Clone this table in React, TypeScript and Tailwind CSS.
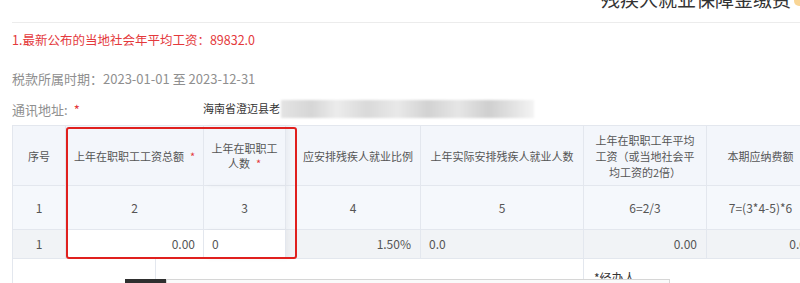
import React from 'react';

const font = { fontFamily: '"Noto Sans CJK SC", "Noto Sans", sans-serif' };

function Star() {
  return <span className="text-[#e4393c] ml-[6px]">*</span>;
}

export default function App() {
  const cols = 'grid grid-cols-[53px_138px_82px_135px_163px_123px_108px] w-[802px]';
  const cell = 'border-r border-b border-[#e3e7ee] flex items-center';

  return (
    <div className="relative w-[800px] h-[283px] overflow-hidden bg-white text-[#555]" style={font}>
      {/* Title bar */}
      <div className="ml-[12px] h-[23px] border-b border-[#ececec] flex justify-end items-start">
        <span className="-mt-[11px] text-[19px] leading-[19px] text-[#333]">残疾人就业保障金缴费</span>
        <span className="ml-[3px] -mt-[4px] w-[6px] h-[10px] rounded-l-full bg-[#f6c56a]/70" />
      </div>

      <div className="px-[12px]">
        <div className="mt-[7px] text-[12.5px] leading-[20px] text-[#e4393c]">1.最新公布的当地社会年平均工资：89832.0</div>
        <div className="mt-[19px] text-[13px] leading-[20px] text-[#8f8f8f]">税款所属时期：2023-01-01 至 2023-12-31</div>

        <div className="mt-[11px] flex items-center h-[20px]">
          <div className="w-[191px] text-[13px] text-[#8f8f8f]">
            通讯地址:<span className="text-[#e4393c] ml-[6px]">*</span>
          </div>
          <span className="text-[11px] text-[#333] -mt-[3px]">海南省澄迈县老</span>
          <div className="ml-[1px] -mt-[2px] w-[253px] h-[18px] blur-[1px] bg-[linear-gradient(90deg,#e4e4e4,#d6d6d6_12%,#ececec_22%,#d9d9d9_34%,#e9e9e9_46%,#d2d2d2_58%,#e6e6e6_70%,#cfcfcf_82%,#e3e3e3_92%,#f4f4f4)]" />
        </div>
      </div>

      {/* Table */}
      <div className="relative ml-[12px] mt-[5px] border-t border-l border-[#e3e7ee] w-[802px]">
        <div className={`${cols} h-[60px] bg-[#f3f6fb] text-[11px] leading-[16px]`}>
          <div className={`${cell} justify-center`}>序号</div>
          <div className={`${cell} justify-center`}>上年在职职工工资总额<Star /></div>
          <div className={`${cell} justify-center text-center leading-[15px] shadow-[3px_0_4px_rgba(0,0,0,0.04)]`}>
            <div>上年在职职工<br />人数<Star /></div>
          </div>
          <div className={`${cell} justify-center pl-[10px]`}>应安排残疾人就业比例</div>
          <div className={`${cell} justify-center`}>上年实际安排残疾人就业人数</div>
          <div className={`${cell} justify-center text-center`}>
            <div>上年在职职工年平均<br />工资（或当地社会平<br />均工资的2倍）</div>
          </div>
          <div className={`${cell} justify-center`}>本期应纳费额</div>
        </div>

        <div className={`${cols} h-[44px] bg-[#f5f8fc] text-[12px]`}>
          <div className={`${cell} justify-center`}>1</div>
          <div className={`${cell} justify-center`}>2</div>
          <div className={`${cell} justify-center shadow-[3px_0_4px_rgba(0,0,0,0.04)]`}>3</div>
          <div className={`${cell} justify-center`}>4</div>
          <div className={`${cell} justify-center`}>5</div>
          <div className={`${cell} justify-center`}>6=2/3</div>
          <div className={`${cell} justify-center`}>7=(3*4-5)*6</div>
        </div>

        <div className={`${cols} h-[29px] bg-[#f1f3f6] text-[12px]`}>
          <div className={`${cell} justify-center`}>1</div>
          <div className={`${cell} justify-end pr-[8px] bg-white`}>0.00</div>
          <div className={`${cell} pl-[8px] bg-white shadow-[3px_0_4px_rgba(0,0,0,0.04)]`}>0</div>
          <div className={`${cell} justify-end pr-[9px]`}>1.50%</div>
          <div className={`${cell} pl-[8px]`}>0.0</div>
          <div className={`${cell} justify-end pr-[9px]`}>0.00</div>
          <div className={`${cell} justify-end pr-[8px]`}>0.0</div>
        </div>

        <div className="grid grid-cols-[143px_428px_231px] w-[802px] h-[40px] bg-white text-[12px]">
          <div className="border-r border-[#e3e7ee]" />
          <div className="border-r border-[#e3e7ee]" />
          <div className="pl-[10px] pt-[10px] text-[#333]">*经办人</div>
        </div>

        {/* highlight */}
        <div className="absolute left-[53px] top-[1px] w-[231px] h-[132px] border-2 border-[#e0201e] rounded-[3px] pointer-events-none" />
      </div>

      {/* floating bar at bottom */}
      <div className="absolute left-[125px] top-[279px] flex h-[10px]">
        <div className="w-[41px] bg-[#2f2f2f]" />
        <div className="w-[504px] bg-[#fafafa] border-t border-l border-r border-[#d6d6d6]" />
      </div>
    </div>
  );
}
